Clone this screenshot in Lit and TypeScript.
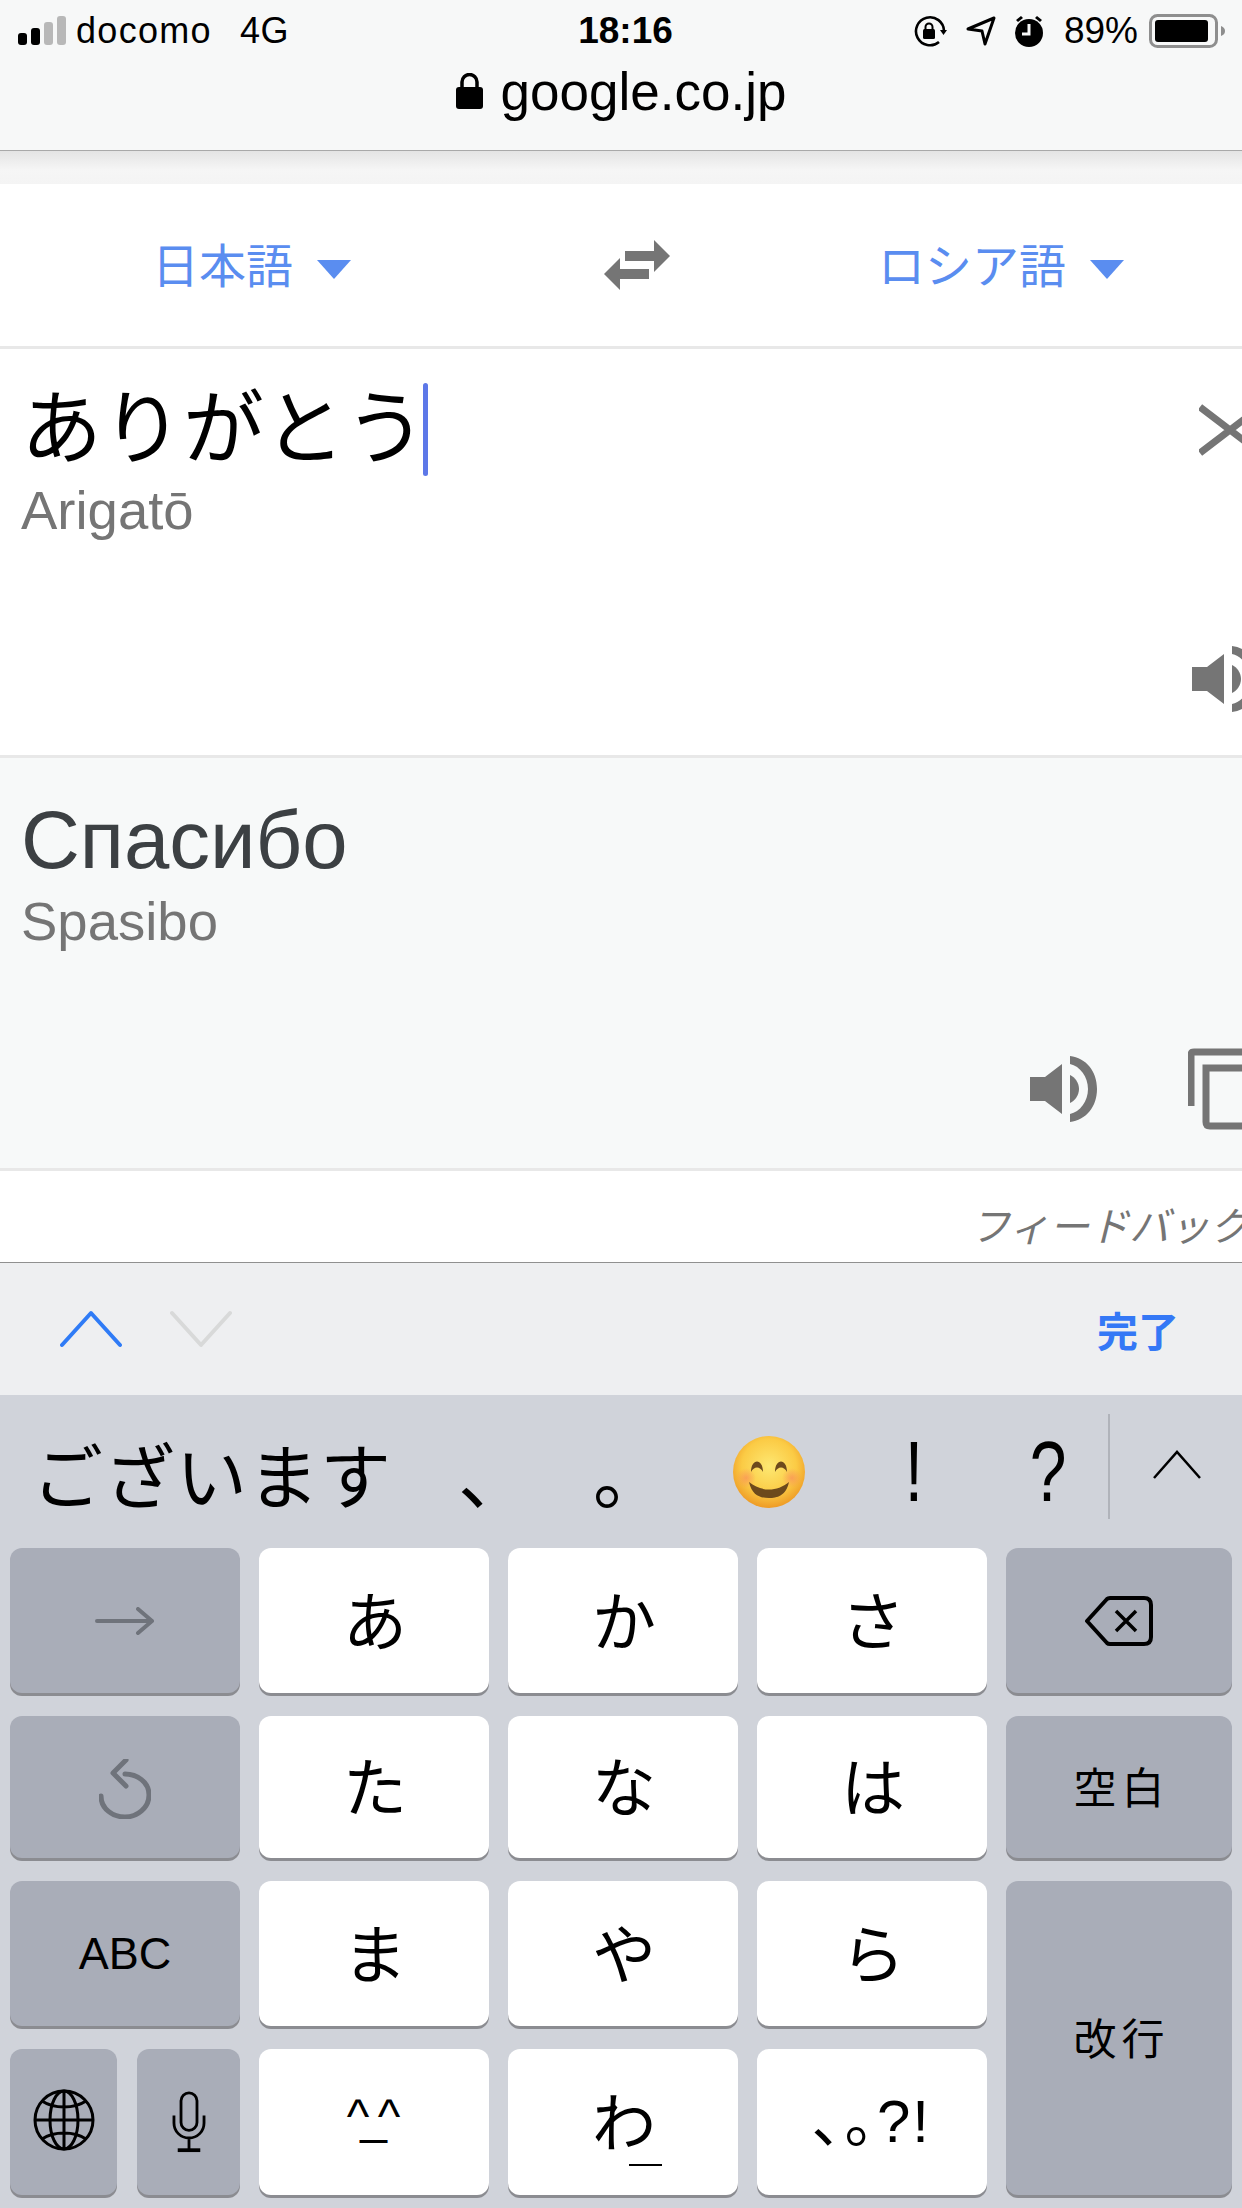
import { LitElement, html, css } from "lit";
import { customElement } from "lit/decorators.js";

const speaker = html`<svg class="speaker" viewBox="0 0 67 66"><path d="M0 21h15L32 8v50L15 45H0z" /><path d="M40 0c16 2 27 15 27 33S56 64 40 66v-8c10-2 18-13 18-25S50 10 40 8z"/><path d="M40 19c5 2 9 8 9 14s-4 12-9 14z"/></svg>`;

@customElement("app-root")
export class AppRoot extends LitElement {
  static styles = css`
    :host { display: flex; flex-direction: column; width: 1242px; height: 2208px; overflow: hidden; background: #fff;
      font-family: "Liberation Sans", "Noto Sans CJK JP", sans-serif; color: #000; }
    svg { display: block; flex: none; }

    .chrome { height: 150px; background: #f7f8f8; border-bottom: 1px solid #a9a9a9; display: flex; flex-direction: column; flex: none; }
    .status { height: 62px; display: grid; grid-template-columns: 1fr auto 1fr; align-items: center; padding: 0 15px 0 18px; font-size: 36px; }
    .status-l { display: flex; align-items: center; }
    .signal { margin-right: 10px; }
    .carrier { letter-spacing: 1.3px; }
    .net { margin-left: 28px; letter-spacing: .5px; }
    .time { font-weight: 700; font-size: 37px; margin-left: 6px; }
    .status-r { display: flex; align-items: center; justify-content: flex-end; }
    .loc { margin-left: 19px; }
    .alarm { margin-left: 18px; }
    .pct { font-size: 37px; margin: 0 11px 0 20px; }
    .url { display: flex; align-items: center; justify-content: center; gap: 18px; font-size: 53px; height: 58px; }
    .band { height: 33px; flex: none; background: linear-gradient(#e4e4e4, #f6f6f6 60%, #f4f4f4); }

    .lang { height: 162px; flex: none; display: flex; align-items: center; padding-left: 152px; border-bottom: 3px solid #e8e8e8; color: #5a8df0; font-size: 47px; white-space: nowrap; }
    .lname { padding-bottom: 5px; }
    .tri { width: 0; height: 0; border-left: 17px solid transparent; border-right: 17px solid transparent; border-top: 19px solid #5a8df0; margin: 8px 0 0 24px; }
    .swap { margin-left: 253px; margin-right: 208px; }

    .pane { display: flex; flex: none; justify-content: space-between; box-sizing: border-box; }
    .source { height: 409px; border-bottom: 3px solid #e8e8e8; padding: 30px 0 0 21px; }
    .typed { display: flex; align-items: center; font-size: 81px; height: 97px; color: #000; }
    .typed span:first-child { position: relative; top: -6px; }
    .caret { width: 5px; height: 93px; background: #5d78e8; border-radius: 3px; margin: 4px 0 0 -3px; }
    .roman { font-size: 54.5px; color: #757575; line-height: 62px; margin-top: 4px; }
    .side { display: flex; flex-direction: column; justify-content: space-between; align-items: flex-start; width: 50px; padding: 25px 0 43px; }
    .x { margin-left: 7px; }
    .speaker { width: 67px; height: 66px; fill: #757575; }

    .output { height: 413px; background: #f7f9f9; border-bottom: 3px solid #e8e8e8; flex-direction: column; padding: 42px 0 38px 21px; }
    .result { font-size: 81.500px; line-height: 80px; color: #3c4043; }
    .output .roman { margin-top: 11px; }
    .actions { margin-top: auto; display: flex; align-items: center; justify-content: flex-end; gap: 91px; margin-right: -20px; }

    .feedback { height: 91px; flex: none; display: flex; align-items: center; padding: 14px 0 0 970px; box-sizing: border-box; color: #757575; font-size: 40px; font-style: italic; white-space: nowrap; overflow: hidden; }

    .toolbar { height: 133px; flex: none; box-sizing: border-box; background: #eeeff1; border-top: 1px solid #909090; display: flex; align-items: center; padding: 0 63px 0 60px; gap: 48px; }
    .done { margin-left: auto; color: #3478f6; font-size: 41px; font-weight: 700; }

    .kb { flex: 1; background: #d0d3da; display: flex; flex-direction: column; }
    .cands { height: 153px; flex: none; display: grid; grid-template-columns: 396px 88px 182px 142px 148px 120px 136px; align-items: center; padding-left: 32px; justify-items: center; font-size: 71px; box-sizing: border-box; }
    .word { justify-self: start; white-space: nowrap; letter-spacing: 1px; }
    .punct { font-size: 72px; padding-left: 44px; }
    .latin { font-size: 66px; display: block; transform: scaleY(1.28); }
    .more { border-left: 2px solid #b0b3ba; height: 105px; width: 100%; display: flex; align-items: center; justify-content: center; box-sizing: border-box; margin-top: -10px; }
    .more svg { margin-bottom: 4px; }

    .keys { display: grid; grid-template-columns: 230px 230px 230px 230px 226px; grid-template-rows: 145px 142px 145px 146px; column-gap: 19px; row-gap: 23px; padding: 0 10px; }
    .key { background: #fff; border-radius: 12px; box-shadow: 0 3px 0 #8b8c91; display: flex; align-items: center; justify-content: center; font-size: 64px; position: relative; min-width: 0; box-sizing: border-box; }
    .kana { padding: 0 0 8px 2px; }
    .fn { background: #a9adb8; }
    .label { font-size: 43px; letter-spacing: 5px; padding: 0 0 5px 5px; }
    .abc { font-size: 45px; }
    .ret { grid-column: 5; grid-row: 3 / span 2; }
    .pair { display: flex; gap: 20px; }
    .pair .key { flex: none; }
    .globe { width: 107px; padding-bottom: 4px; }
    .mic { width: 103px; }
    .undo { padding-top: 4px; }
    .face { font-size: 48px; letter-spacing: -9px; padding: 0 10px 12px 0; }
    .tick { position: absolute; left: 121px; top: 115px; width: 33px; height: 2px; background: #000; }
    .marks { font-size: 60px; letter-spacing: 2px; padding-bottom: 14px; }
  `;

  render() {
    return html`
      <div class="chrome">
        <div class="status">
          <div class="status-l">
            <svg class="signal" width="48" height="30" viewBox="0 0 48 30">
              <rect x="0" y="17" width="9" height="12" rx="3" /><rect x="13" y="12" width="9" height="17" rx="3" />
              <rect x="26" y="6" width="9" height="23" rx="3" fill="#b8b8b8" /><rect x="39" y="0" width="9" height="29" rx="3" fill="#b8b8b8" />
            </svg>
            <span class="carrier">docomo</span><span class="net">4G</span>
          </div>
          <div class="time">18:16</div>
          <div class="status-r">
            <svg width="34" height="32" viewBox="0 0 34 32" fill="none" stroke="#000" stroke-width="2.6">
              <path d="M31 16a14 14 0 1 0-5 11" /><path d="M27 15h7l-3.500 5z" fill="#000" stroke="none"/>
              <rect x="10" y="14" width="12" height="10" rx="1.500" fill="#000" stroke="none"/><path d="M12.500 15v-3a3.500 3.500 0 0 1 7 0v3" stroke-width="2"/>
            </svg>
            <svg class="loc" width="30" height="32" viewBox="0 0 30 32" fill="none" stroke="#000" stroke-width="3" stroke-linejoin="round">
              <path d="M2 14 28 3l-9 26-3-13z" />
            </svg>
            <svg class="alarm" width="30" height="34" viewBox="0 0 30 34">
              <circle cx="15" cy="19" r="14" /><path d="M2 6l5-4 2 2-5 4zM28 6l-5-4-2 2 5 4z" />
              <path d="M15 10v10H8" fill="none" stroke="#f7f8f8" stroke-width="3" />
            </svg>
            <span class="pct">89%</span>
            <svg width="78" height="34" viewBox="0 0 78 34">
              <rect x="1.500" y="1.500" width="66" height="31" rx="7" fill="none" stroke="#8e8e8e" stroke-width="3" />
              <rect x="6" y="6" width="53" height="22" rx="3" />
              <path d="M72 12c3 1 4 3 4 5s-1 4-4 5z" fill="#8e8e8e" />
            </svg>
          </div>
        </div>
        <div class="url">
          <svg width="27" height="36" viewBox="0 0 27 36">
            <rect y="14" width="27" height="22" rx="3" /><path d="M6 15V9a7.500 7.500 0 0 1 15 0v6" fill="none" stroke="#000" stroke-width="3.500" />
          </svg>
          <span>google.co.jp</span>
        </div>
      </div>
      <div class="band"></div>

      <div class="lang">
        <span class="lname">日本語</span>
        <span class="tri"></span>
        <svg class="swap" width="66" height="50" viewBox="0 0 66 50" fill="#757575">
          <path d="M66 16 50 0v11H21v10h29v11z" /><path d="M0 34l16-16v11h29v10H16v11z" />
        </svg>
        <span class="lname">ロシア語</span>
        <span class="tri"></span>
      </div>

      <div class="pane source">
        <div>
          <div class="typed"><span>ありがとう</span><span class="caret"></span></div>
          <div class="roman">Arigatō</div>
        </div>
        <div class="side">
          <svg class="x" width="50" height="52" viewBox="0 0 50 52" fill="none" stroke="#757575" stroke-width="7">
            <path d="M1 3l60 46M61 3 1 49" />
          </svg>
          ${speaker}
        </div>
      </div>

      <div class="pane output">
        <div class="result">Спасибо</div>
        <div class="roman">Spasibo</div>
        <div class="actions">
          ${speaker}
          <svg width="74" height="82" viewBox="0 0 74 82" fill="none" stroke="#757575" stroke-width="7">
            <path d="M3 58V7q0-3 3-3h50" /><path d="M18 20h60v58H22q-4 0-4-4z" />
          </svg>
        </div>
      </div>

      <div class="feedback">フィードバック</div>

      <div class="toolbar">
        <svg width="62" height="38" viewBox="0 0 62 38" fill="none" stroke="#2f7bf6" stroke-width="4" stroke-linecap="round" stroke-linejoin="round"><path d="M2 35 31 3l29 32" /></svg>
        <svg width="62" height="38" viewBox="0 0 62 38" fill="none" stroke="#d8d9d9" stroke-width="4" stroke-linecap="round" stroke-linejoin="round"><path d="M2 3l29 32L60 3" /></svg>
        <span class="done">完了</span>
      </div>

      <div class="kb">
        <div class="cands">
          <span class="word">ございます</span>
          <span class="punct">、</span>
          <span class="punct">。</span>
          <svg width="72" height="72" viewBox="0 0 72 72">
            <defs>
              <radialGradient id="fc" cx="50%" cy="42%" r="58%"><stop offset="0" stop-color="#fde872" /><stop offset=".65" stop-color="#fbcb45" /><stop offset="1" stop-color="#ee9a25" /></radialGradient>
              <radialGradient id="ch"><stop offset="0" stop-color="#f9925a" stop-opacity=".75" /><stop offset="1" stop-color="#f9925a" stop-opacity="0" /></radialGradient>
            </defs>
            <circle cx="36" cy="36" r="36" fill="url(#fc)" />
            <circle cx="13" cy="42" r="10" fill="url(#ch)" /><circle cx="59" cy="42" r="10" fill="url(#ch)" />
            <path d="M18 36c0-14 12-14 12 0-3-6-9-6-12 0zM42 36c0-14 12-14 12 0-3-6-9-6-12 0z" fill="#6d4a1c" />
            <path d="M16 46c12 10 28 10 40 0-3 14-12 16-20 16s-17-2-20-16z" fill="#6d4a1c" />
          </svg>
          <span class="latin">!</span>
          <span class="latin">?</span>
          <span class="more">
            <svg width="48" height="30" viewBox="0 0 48 30" fill="none" stroke="#000" stroke-width="2.500"><path d="M1 28 24 2l23 26" /></svg>
          </span>
        </div>
        <div class="keys">
          <div class="key fn">
            <svg width="60" height="28" viewBox="0 0 60 28" fill="none" stroke="#6f737b" stroke-width="4" stroke-linecap="round" stroke-linejoin="round"><path d="M2 14h55M43 2l14 12-14 12" /></svg>
          </div>
          <div class="key kana">あ</div><div class="key kana">か</div><div class="key kana">さ</div>
          <div class="key fn">
            <svg width="68" height="50" viewBox="0 0 68 50" fill="none" stroke="#000" stroke-width="4" stroke-linejoin="round"><path d="M2 25 22 3q1-1 3-1h34q7 0 7 7v32q0 7-7 7H25q-2 0-3-1z" /><path d="M31 15l20 20M51 15 31 35" stroke-width="3.500" /></svg>
          </div>

          <div class="key fn undo">
            <svg width="52" height="60" viewBox="0 0 52 60" fill="none" stroke="#6f737b" stroke-width="5" stroke-linecap="round" stroke-linejoin="round"><path d="M26 15c12 0 24 8 24 21S38 58 26 58 2 50 2 37" /><path d="M27 1 14 14l13 13" /></svg>
          </div>
          <div class="key kana">た</div><div class="key kana">な</div><div class="key kana">は</div>
          <div class="key fn"><span class="label">空白</span></div>

          <div class="key fn"><span class="abc">ABC</span></div>
          <div class="key kana">ま</div><div class="key kana">や</div><div class="key kana">ら</div>
          <div class="key fn ret"><span class="label">改行</span></div>

          <div class="pair">
            <div class="key fn globe">
              <svg width="62" height="62" viewBox="0 0 62 62" fill="none" stroke="#000" stroke-width="3">
                <circle cx="31" cy="31" r="29" /><ellipse cx="31" cy="31" rx="14" ry="29" /><path d="M31 2v58M2 31h58M9 12c12 8 32 8 44 0M9 50c12-8 32-8 44 0" />
              </svg>
            </div>
            <div class="key fn mic">
              <svg width="36" height="62" viewBox="0 0 36 66" fill="none" stroke="#000" stroke-width="3">
                <rect x="9.500" y="2" width="17" height="40" rx="8.500" /><path d="M2 26v8c0 9 7 16 16 16s16-7 16-16v-8M18 50v12" />
                <path d="M6 63h24" stroke-width="4" />
              </svg>
            </div>
          </div>
          <div class="key"><span class="face">^_^</span></div>
          <div class="key kana">わ<span class="tick"></span></div>
          <div class="key"><span class="marks">､｡?!</span></div>
        </div>
      </div>
    `;
  }
}
